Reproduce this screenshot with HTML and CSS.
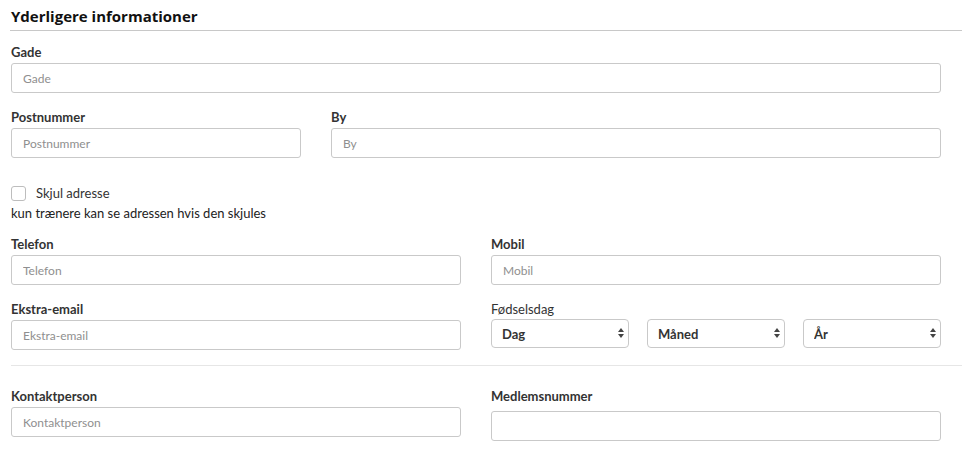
FILE: index.html
```html
<!DOCTYPE html>
<html lang="da">
<head>
<meta charset="utf-8">
<title>Yderligere informationer</title>
<link rel="stylesheet" href="styles.css">
</head>
<body>
<section class="panel">
  <h2 class="panel-title">Yderligere informationer</h2>

  <div class="row">
    <div class="field span-12">
      <label class="label">Gade</label>
      <input class="input" type="text" placeholder="Gade">
    </div>
  </div>

  <div class="row">
    <div class="field span-4">
      <label class="label">Postnummer</label>
      <input class="input" type="text" placeholder="Postnummer">
    </div>
    <div class="field span-8">
      <label class="label">By</label>
      <input class="input" type="text" placeholder="By">
    </div>
  </div>

  <div class="check-block">
    <label class="check">
      <input class="check-box" type="checkbox">
      <span>Skjul adresse</span>
    </label>
    <p class="help">kun trænere kan se adressen hvis den skjules</p>
  </div>

  <div class="row">
    <div class="field span-6">
      <label class="label">Telefon</label>
      <input class="input" type="text" placeholder="Telefon">
    </div>
    <div class="field span-6">
      <label class="label">Mobil</label>
      <input class="input" type="text" placeholder="Mobil">
    </div>
  </div>

  <div class="row">
    <div class="field span-6">
      <label class="label">Ekstra-email</label>
      <input class="input" type="text" placeholder="Ekstra-email">
    </div>
    <div class="field span-6">
      <label class="label label-light">Fødselsdag</label>
      <div class="date-selects">
        <span class="select-wrap"><select class="select"><option>Dag</option></select></span>
        <span class="select-wrap"><select class="select"><option>Måned</option></select></span>
        <span class="select-wrap"><select class="select"><option>År</option></select></span>
      </div>
    </div>
  </div>

  <hr class="divider">

  <div class="row">
    <div class="field span-6">
      <label class="label">Kontaktperson</label>
      <input class="input" type="text" placeholder="Kontaktperson">
    </div>
    <div class="field span-6">
      <label class="label">Medlemsnummer</label>
      <input class="input input-offset" type="text">
    </div>
  </div>
</section>
</body>
</html>
```

FILE: styles.css
```css
* { box-sizing: border-box; }

html, body {
  margin: 0;
  padding: 0;
  background: #fff;
}

body {
  font-family: Lato, "Open Sans", Arial, sans-serif;
  color: #333;
  font-size: 13px;
}

.panel {
  padding: 0 21px 0 11px;
}

.panel-title {
  margin: 0 -21px 0 -1px;
  padding: 6px 0 4px 1px;
  font-family: "Open Sans", Arial, sans-serif;
  font-weight: 700;
  font-size: 15px;
  line-height: 20px;
  color: #111;
  border-bottom: 1px solid #c8c8c8;
}

.row {
  display: grid;
  grid-template-columns: repeat(12, 1fr);
  column-gap: 30px;
}

.span-12 { grid-column: span 12; }
.span-8 { grid-column: span 8; }
.span-6 { grid-column: span 6; }
.span-4 { grid-column: span 4; }

.field {
  display: flex;
  flex-direction: column;
  padding-top: 15px;
}

.row:first-of-type .field { padding-top: 12px; }

.label {
  display: block;
  font-weight: 700;
  font-size: 13px;
  line-height: 18px;
  margin-bottom: 2px;
  color: #333;
}

.label-light {
  font-weight: 400;
  color: #333;
}

.input {
  display: block;
  width: 100%;
  height: 30px;
  padding: 0 11px;
  font-family: Lato, "Open Sans", Arial, sans-serif;
  font-size: 12px;
  color: #333;
  border: 1px solid #c9c9c9;
  border-radius: 3px;
  background: #fff;
  outline: none;
}

.input::placeholder { color: #8f8f8f; }

.input-offset { margin-top: 4px; }

.check-block {
  padding-top: 25px;
}

.check {
  display: flex;
  align-items: center;
  gap: 10px;
  height: 20px;
  font-size: 13px;
  color: #333;
}

.check-box {
  appearance: none;
  -webkit-appearance: none;
  margin: 0;
  width: 15px;
  height: 15px;
  border: 1px solid #bdbdbd;
  border-radius: 3px;
  background: #fff;
}

.help {
  margin: 0;
  font-size: 13px;
  line-height: 20px;
  color: #222;
}

.check-block + .row .field { padding-top: 12px; }

.date-selects {
  display: grid;
  grid-template-columns: repeat(3, 1fr);
  column-gap: 18px;
  margin-top: -1px;
}

.select-wrap {
  position: relative;
  display: block;
}

.select {
  appearance: none;
  -webkit-appearance: none;
  display: block;
  width: 100%;
  height: 29px;
  padding: 0 20px 0 10px;
  font-family: Lato, "Open Sans", Arial, sans-serif;
  font-weight: 700;
  font-size: 13px;
  color: #333;
  border: 1px solid #c9c9c9;
  border-radius: 4px;
  background: #fff;
}

.select-wrap::before,
.select-wrap::after {
  content: "";
  position: absolute;
  right: 5px;
  width: 0;
  height: 0;
  border-left: 3px solid transparent;
  border-right: 3px solid transparent;
  pointer-events: none;
}

.select-wrap::before {
  top: 9px;
  border-bottom: 4px solid #444;
}

.select-wrap::after {
  top: 15px;
  border-top: 4px solid #444;
}

.divider {
  margin: 15px -21px 0 0;
  border: 0;
  border-top: 1px solid #e6e6e6;
  height: 0;
}

.divider + .row .field { padding-top: 21px; }
```
